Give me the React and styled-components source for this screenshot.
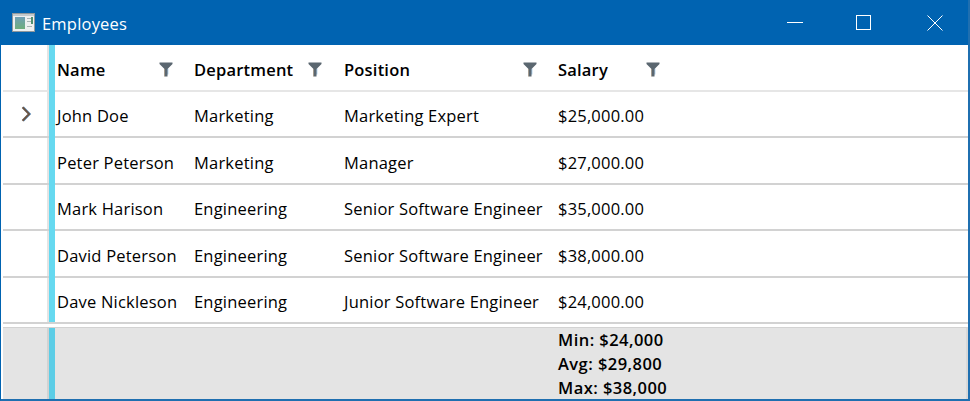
import React from 'react';
import styled, { createGlobalStyle } from 'styled-components';

const employees = [
  { name: 'John Doe', department: 'Marketing', position: 'Marketing Expert', salary: '$25,000.00', height: 46, current: true },
  { name: 'Peter Peterson', department: 'Marketing', position: 'Manager', salary: '$27,000.00', height: 47 },
  { name: 'Mark Harison', department: 'Engineering', position: 'Senior Software Engineer', salary: '$35,000.00', height: 46 },
  { name: 'David Peterson', department: 'Engineering', position: 'Senior Software Engineer', salary: '$38,000.00', height: 47 },
  { name: 'Dave Nickleson', department: 'Engineering', position: 'Junior Software Engineer', salary: '$24,000.00', height: 46, last: true },
];

const columns = '46px 6px 139px 150px 214px 1fr';

const Global = createGlobalStyle`
  html, body {
    margin: 0;
    padding: 0;
    background: #fff;
  }
`;

const Window = styled.div`
  width: 970px;
  height: 401px;
  box-sizing: border-box;
  border-left: 1px solid #0063b1;
  border-right: 2px solid #1f6fb0;
  border-bottom: 2px solid #1f6fb0;
  display: flex;
  flex-direction: column;
  overflow: hidden;
  font-family: "Open Sans", "Noto Sans", sans-serif;
  letter-spacing: 0.2px;
  color: #000;
  background: #fff;
`;

const TitleBar = styled.div`
  height: 45px;
  flex: none;
  margin-right: -2px;
  background: #0063b1;
  color: #fff;
  display: flex;
  align-items: center;
  padding-left: 11px;
  font-size: 16.5px;
`;

const Title = styled.span`
  margin-left: 7px;
  flex: 1;
  margin-top: 2px;
`;

const WinButton = styled.div`
  width: 70px;
  height: 45px;
  box-sizing: border-box;
  padding-right: ${p => p.$shift || 0}px;
  display: flex;
  align-items: center;
  justify-content: center;
`;

const Row = styled.div`
  display: grid;
  grid-template-columns: ${columns};
  height: ${p => p.$height}px;
  flex: none;
  margin: 0 0 0 2px;
  box-sizing: border-box;
  border-bottom: 2px solid ${p => p.$line};
  font-size: 16.5px;
`;

const Gutter = styled.div`
  box-sizing: border-box;
  border-right: 2px solid #e4e4e4;
  display: flex;
  align-items: center;
  justify-content: center;
  padding-left: 2px;
`;

const Accent = styled.div`
  background: #66d9f0;
  margin-bottom: ${p => (p.$last ? 0 : -2)}px;
`;

const Cell = styled.div`
  display: flex;
  align-items: center;
  white-space: nowrap;
  padding-top: ${p => (p.$tall ? 3 : 2)}px;
  padding-left: ${p => (p.$first ? 2 : 0)}px;
`;

const HeaderCell = styled(Cell)`
  font-weight: 600;
  justify-content: space-between;
  padding-top: 3px;
  padding-right: ${p => p.$right || 0}px;
  width: ${p => (p.$width ? `${p.$width}px` : 'auto')};
`;

const Footer = styled.div`
  display: grid;
  grid-template-columns: ${columns};
  flex: 1;
  margin: 3px 0 0 2px;
  box-sizing: border-box;
  background: #e4e4e4;
  border-top: 1px solid #d2d2d2;
  border-bottom: 2px solid #d8d8d8;
  border-right: 2px solid #d8d8d8;
`;

const FooterGutter = styled(Gutter)`
  border-right-color: #d2d2d2;
`;

const FooterAccent = styled.div`
  background: #5ccde6;
`;

const Summary = styled.div`
  grid-column: 6;
  font-size: 16.5px;
  font-weight: 600;
  letter-spacing: 0.45px;
  line-height: 24px;
  white-space: nowrap;
`;

const FilterIcon = () => (
  <svg width="14" height="15" viewBox="0 0 14 15">
    <path d="M5.5 6.5V14.5H5V6.5Z" fill="#d9a25f" />
    <path d="M8.5 6.5V12.5H9.2V6.5Z" fill="#5a9fd8" />
    <path d="M0.5 0.5H13.5V2L8.5 7V14.5H5.5V7L0.5 2Z" fill="#5b6770" />
  </svg>
);

const Chevron = () => (
  <svg width="11" height="16" viewBox="0 0 11 16">
    <path d="M2.2 1.2L8.8 8L2.2 14.8" fill="none" stroke="#5b93c7" strokeWidth="2" />
    <path d="M1.5 1.2L8.1 8L1.5 14.8" fill="none" stroke="#6b5443" strokeWidth="2" />
  </svg>
);

const AppIcon = () => (
  <svg width="23" height="19" viewBox="0 0 23 19">
    <defs>
      <linearGradient id="pane" x1="0" y1="0" x2="0" y2="1">
        <stop offset="0" stopColor="#6f9fb5" />
        <stop offset="1" stopColor="#6fae7c" />
      </linearGradient>
    </defs>
    <rect x="0.5" y="0.5" width="22" height="18" fill="#eef0f0" stroke="#8f979c" />
    <rect x="1" y="1" width="21" height="2" fill="#c4cacd" />
    <rect x="3" y="4" width="10" height="12" fill="url(#pane)" />
    <rect x="15" y="5" width="4" height="1" fill="#a8b4b4" />
    <rect x="15" y="8" width="4" height="1" fill="#a8b4b4" />
    <rect x="19" y="4" width="2" height="7" fill="#4f8f70" />
    <rect x="15" y="13" width="5" height="1" fill="#a8b4b4" />
  </svg>
);

export default function App() {
  return (
    <Window>
      <Global />
      <TitleBar>
        <AppIcon />
        <Title>Employees</Title>
        <WinButton $shift={1}>
          <svg width="16" height="2" viewBox="0 0 16 2"><rect width="16" height="1" fill="#fff" /></svg>
        </WinButton>
        <WinButton $shift={3}>
          <svg width="15" height="15" viewBox="0 0 15 15"><rect x="0.5" y="0.5" width="14" height="14" fill="none" stroke="#fff" /></svg>
        </WinButton>
        <WinButton>
          <svg width="16" height="16" viewBox="0 0 16 16"><path d="M0.5 0.5L15.5 15.5M15.5 0.5L0.5 15.5" stroke="#fff" /></svg>
        </WinButton>
      </TitleBar>
      <Row $height={47} $line="#e6e6e6">
        <Gutter />
        <Accent />
        <HeaderCell $first $right={21}>Name<FilterIcon /></HeaderCell>
        <HeaderCell $right={22}>Department<FilterIcon /></HeaderCell>
        <HeaderCell $right={21}>Position<FilterIcon /></HeaderCell>
        <HeaderCell $width={102}>Salary<FilterIcon /></HeaderCell>
      </Row>
      {employees.map(e => (
        <Row key={e.name} $height={e.height} $line="#d2d2d2">
          <Gutter>{e.current && <Chevron />}</Gutter>
          <Accent $last={e.last} />
          <Cell $first $tall={e.height === 47}>{e.name}</Cell>
          <Cell $tall={e.height === 47}>{e.department}</Cell>
          <Cell $tall={e.height === 47}>{e.position}</Cell>
          <Cell $tall={e.height === 47}>{e.salary}</Cell>
        </Row>
      ))}
      <Footer>
        <FooterGutter />
        <FooterAccent />
        <Summary>
          Min: $24,000<br />Avg: $29,800<br />Max: $38,000
        </Summary>
      </Footer>
    </Window>
  );
}
